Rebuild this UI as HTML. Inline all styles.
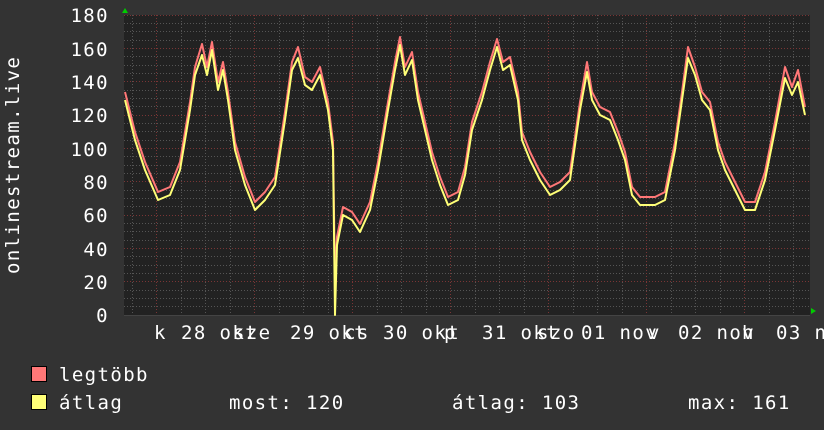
<!DOCTYPE html>
<html><head><meta charset="utf-8"><style>
html,body{margin:0;padding:0;background:#333;}
svg{display:block;}
text{font-family:"DejaVu Sans Mono","Liberation Mono",monospace;fill:#fff;letter-spacing:1.4px;}
</style></head><body>
<svg width="824" height="430" viewBox="0 0 824 430" xmlns="http://www.w3.org/2000/svg">
<rect width="824" height="430" fill="#333"/>
<rect x="124" y="15" width="686" height="300" fill="#222"/>
<g stroke="#555" stroke-width="1" stroke-dasharray="1,2">
<path d="M124 23.5H810M124 31.5H810M124 40.5H810M124 56.5H810M124 65.5H810M124 73.5H810M124 90.5H810M124 98.5H810M124 106.5H810M124 123.5H810M124 131.5H810M124 140.5H810M124 156.5H810M124 165.5H810M124 173.5H810M124 190.5H810M124 198.5H810M124 206.5H810M124 223.5H810M124 231.5H810M124 240.5H810M124 256.5H810M124 265.5H810M124 273.5H810M124 290.5H810M124 298.5H810M124 306.5H810"/>
<path d="M132.5 15V315M181.5 15V315M205.5 15V315M230.5 15V315M279.5 15V315M303.5 15V315M328.5 15V315M377.5 15V315M401.5 15V315M426.5 15V315M475.5 15V315M499.5 15V315M524.5 15V315M573.5 15V315M597.5 15V315M622.5 15V315M671.5 15V315M695.5 15V315M720.5 15V315M769.5 15V315M793.5 15V315"/>
</g>
<g stroke="#7a3535" stroke-width="1" stroke-dasharray="1,2">
<path d="M124 15.5H810M124 48.5H810M124 81.5H810M124 115.5H810M124 148.5H810M124 181.5H810M124 215.5H810M124 248.5H810M124 281.5H810"/>
<path d="M156.5 15V315M254.5 15V315M352.5 15V315M450.5 15V315M548.5 15V315M646.5 15V315M744.5 15V315"/>
</g>
<polygon points="122,13 125,8 128,13" fill="#0c0"/>
<polygon points="811,308 816,311 811,314" fill="#0c0"/>
<line x1="124" y1="315.5" x2="810" y2="315.5" stroke="#444"/>
<g fill="none" stroke-width="2" stroke-linejoin="round">
<polyline stroke="#f77" transform="translate(0,-4)" points="125,96 135,136 145,166 158,196 170,191 180,166 190,106 195,71 202,48 207,71 212,46 218,86 223,66 228,96 235,146 245,181 255,206 265,196 275,181 285,116 292,66 298,51 305,81 312,86 320,71 328,106 333,146 335,285 337,241 343,211 352,216 360,228 370,206 378,166 388,106 395,66 400,41 405,71 412,56 418,96 425,126 432,156 440,181 448,201 458,196 465,171 472,126 482,96 490,66 497,43 503,66 510,61 518,96 522,136 530,156 540,176 550,191 560,186 570,176 580,106 587,66 592,96 600,111 610,116 618,136 625,156 632,191 640,201 655,201 665,196 675,146 682,96 688,51 695,71 702,96 710,106 718,146 725,166 735,186 745,206 755,206 765,176 775,126 785,71 792,91 798,74 805,111"/>
<polyline stroke="#ff7" points="125,100 135,140 145,170 158,200 170,195 180,170 190,110 195,75 202,55 207,75 212,50 218,90 223,70 228,100 235,150 245,185 255,210 265,200 275,185 285,120 292,70 298,58 305,85 312,90 320,75 328,110 333,150 335,315 337,245 343,215 352,220 360,232 370,210 378,170 388,110 395,70 400,45 405,75 412,60 418,100 425,130 432,160 440,185 448,205 458,200 465,175 472,130 482,100 490,70 497,47 503,70 510,65 518,100 522,140 530,160 540,180 550,195 560,190 570,180 580,110 587,72 592,100 600,115 610,120 618,140 625,160 632,195 640,205 655,205 665,200 675,150 682,100 688,58 695,75 702,100 710,110 718,150 725,170 735,190 745,210 755,210 765,180 775,130 785,78 792,95 798,82 805,115"/>
</g>
<g font-size="19" text-anchor="end">
<text x="109" y="22">180</text><text x="109" y="56">160</text><text x="109" y="89">140</text><text x="109" y="122">120</text><text x="109" y="156">100</text><text x="109" y="189">80</text><text x="109" y="222">60</text><text x="109" y="256">40</text><text x="109" y="289">20</text><text x="109" y="322">0</text>
</g>
<text font-size="19" transform="translate(19,274) rotate(-90)">onlinestream.live</text>
<g font-size="19">
<text x="154" y="339">k</text>
<text x="181" y="339">28 okt</text>
<text x="233" y="339">sze</text>
<text x="290" y="339">29 okt</text>
<text x="344" y="339">cs</text>
<text x="383" y="339">30 okt</text>
<text x="444" y="339">p</text>
<text x="482" y="339">31 okt</text>
<text x="537" y="339">szo</text>
<text x="581" y="339">01 nov</text>
<text x="648" y="339">v</text>
<text x="678" y="339">02 nov</text>
<text x="742" y="339">h</text>
<text x="776" y="339">03 nov</text>
</g>
<rect x="31.5" y="366.5" width="15" height="15" fill="#f77" stroke="#000"/>
<rect x="31.5" y="394.5" width="15" height="15" fill="#ff7" stroke="#000"/>
<g font-size="19">
<text x="59" y="381">legtöbb</text>
<text x="59" y="409">átlag</text>
<text x="229" y="409">most: 120</text>
<text x="452" y="409">átlag: 103</text>
<text x="688" y="409">max: 161</text>
</g>
</svg>
</body></html>
